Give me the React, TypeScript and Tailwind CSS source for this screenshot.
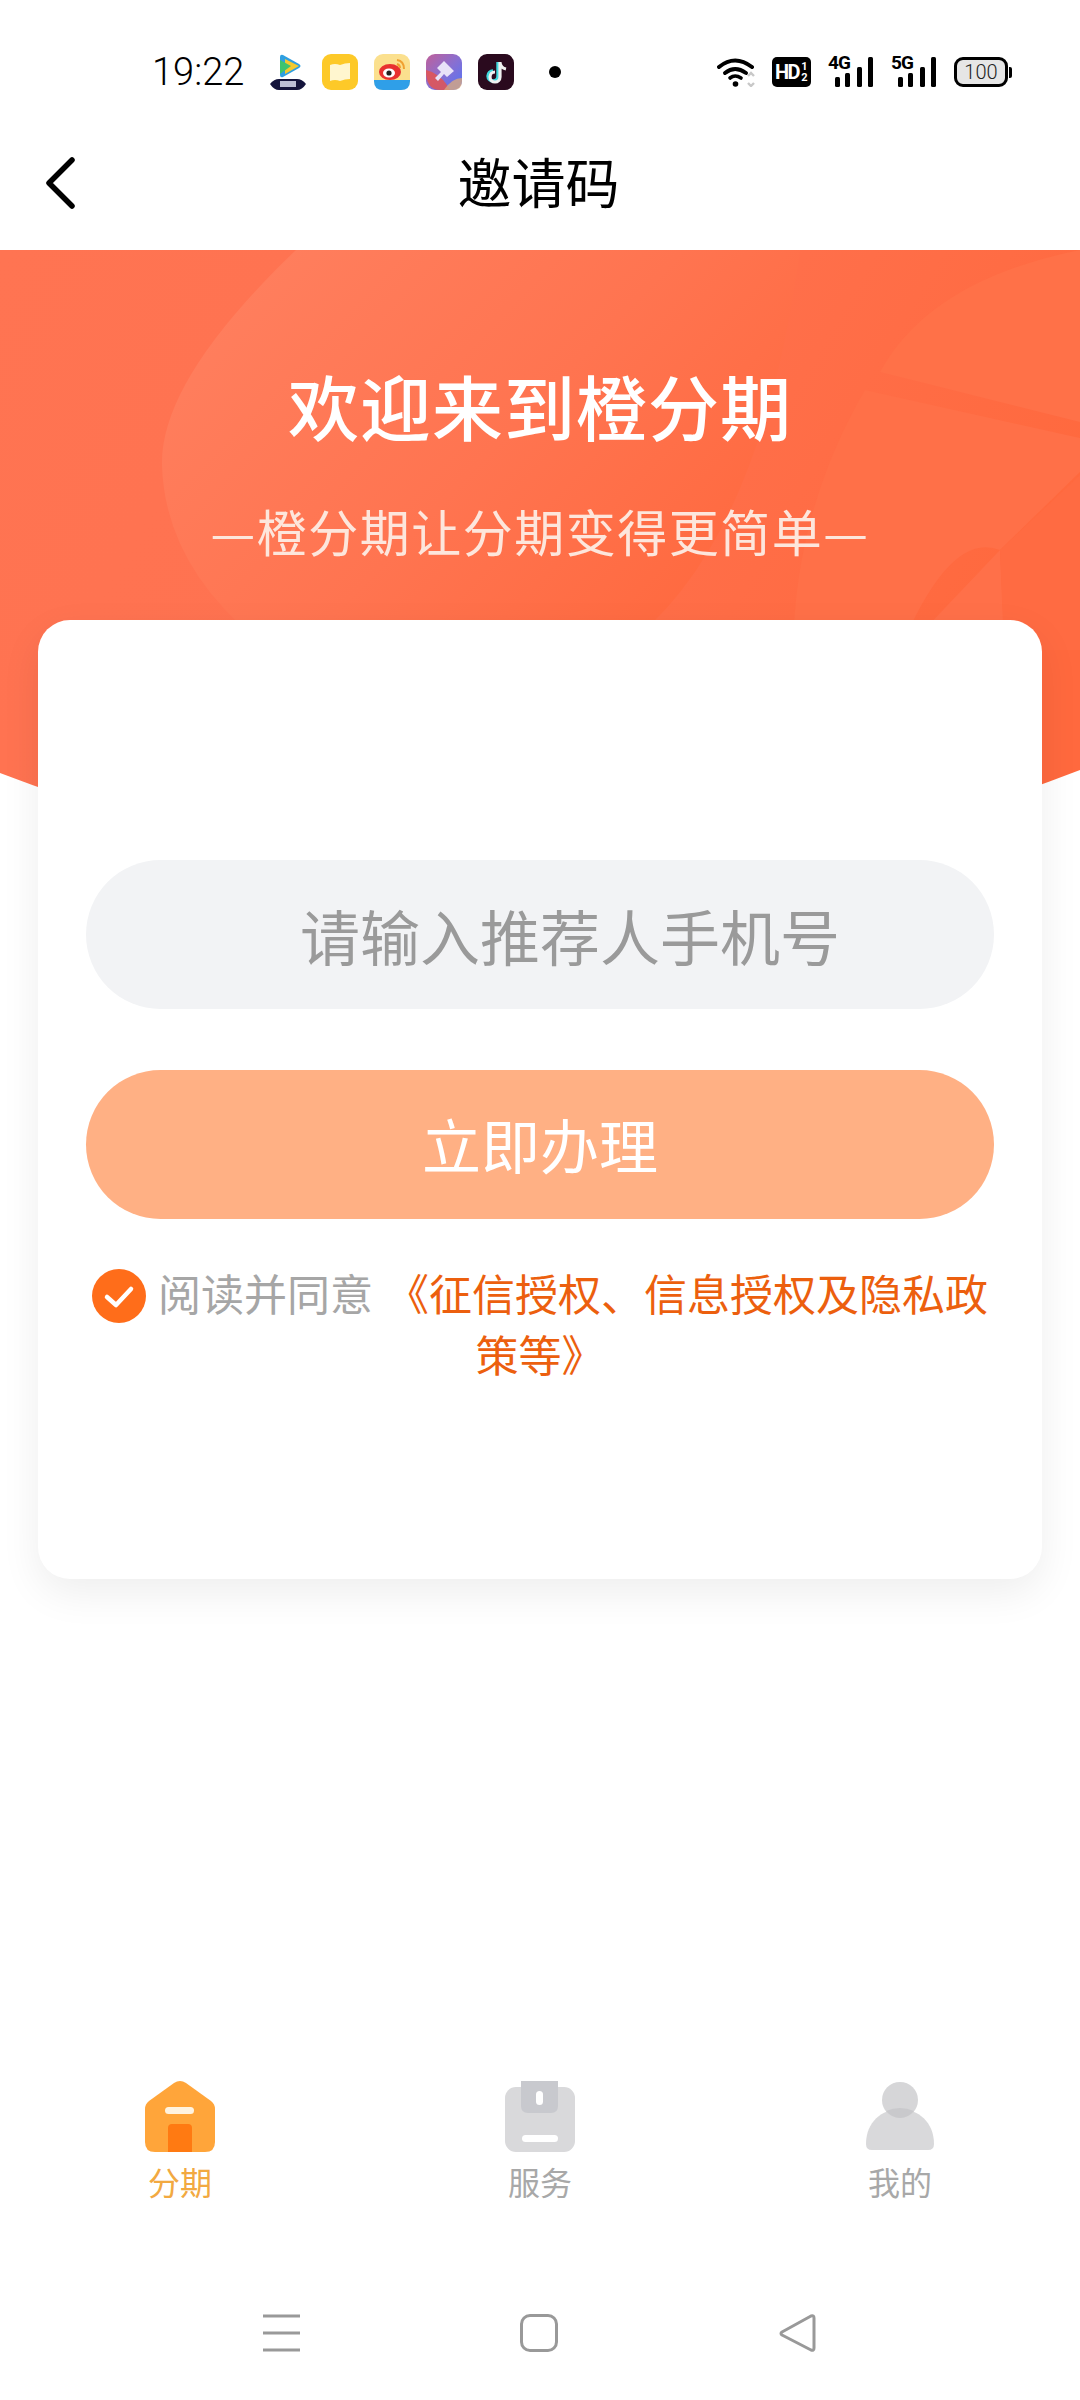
import React from 'react';

const FONT = 'font-["Noto_Sans_CJK_SC","Noto_Sans",sans-serif]';

// Iconos de apps en la barra de estado
const TencentIcon = () => (
  <svg width="36" height="36" viewBox="0 0 36 36">
    <path d="M10 3 Q10 0 13 1 L29 10 Q32 12 29 14 L13 23 Q10 24 10 21 Z" fill="#2f9fe0" />
    <path d="M15 5 L29 12 L15 20 Z" fill="#f4c92f" />
    <path d="M10 6 L21 12 L10 20 Z" fill="#3ec46e" />
    <path d="M0 30 Q4 25 9 25 H27 Q32 25 36 30 Q32 36 27 36 H9 Q4 36 0 30 Z" fill="#14143c" />
    <rect x="10" y="27" width="16" height="6" fill="#d9dcf0" opacity="0.85" />
  </svg>
);

const BookIcon = () => (
  <svg width="36" height="36" viewBox="0 0 36 36">
    <rect width="36" height="36" rx="9" fill="#fdc928" />
    <path d="M8 11 Q13 9 18 11 Q23 9 28 9 V25 Q23 25 18 27 Q13 25 8 27 Z" fill="#fff6cf" />
  </svg>
);

const WeiboIcon = () => (
  <svg width="36" height="36" viewBox="0 0 36 36">
    <rect width="36" height="36" rx="9" fill="#fbe08e" />
    <path d="M0 26 H36 V27 Q36 36 27 36 H9 Q0 36 0 27 Z" fill="#2f9fe8" />
    <ellipse cx="16" cy="18" rx="11" ry="8" fill="#e8312f" />
    <ellipse cx="15" cy="19" rx="6" ry="4.5" fill="#fff" />
    <circle cx="15" cy="19" r="2.6" fill="#222" />
    <path d="M23 6 Q30 7 30 15" stroke="#f0a030" strokeWidth="2" fill="none" />
    <path d="M23 10 Q26 11 26 14" stroke="#f0a030" strokeWidth="2" fill="none" />
  </svg>
);

const BrushIcon = () => (
  <svg width="36" height="36" viewBox="0 0 36 36">
    <defs>
      <linearGradient id="brushBg" x1="0" y1="0" x2="1" y2="1">
        <stop offset="0" stopColor="#c0609a" />
        <stop offset="0.5" stopColor="#8a6fd0" />
        <stop offset="1" stopColor="#5274f8" />
      </linearGradient>
    </defs>
    <rect width="36" height="36" rx="9" fill="url(#brushBg)" />
    <path d="M0 16 Q0 36 14 36 H24 Q18 24 6 18 Z" fill="#e8534a" opacity="0.8" />
    <path d="M18 36 H27 Q36 36 36 27 V24 Q26 24 18 36 Z" fill="#d8a880" opacity="0.8" />
    <path d="M18 7 L28 17 L21 23 L18 20 L12 27 L9 24 L15 18 L11 14 Z" fill="#e8e2f8" />
  </svg>
);

const TiktokIcon = () => (
  <svg width="36" height="36" viewBox="0 0 36 36">
    <rect width="36" height="36" rx="9" fill="#2a0a1e" />
    <path d="M20 8 V22 A5 5 0 1 1 15 17" stroke="#3fd8dc" strokeWidth="3.4" fill="none" />
    <path d="M22 8 V23 A5 5 0 1 1 17 18 M22 9 Q23 14 28 15" stroke="#f0f0f0" strokeWidth="3.2" fill="none" />
  </svg>
);

const SignalBars = () => (
  <svg width="38" height="30" viewBox="0 0 38 30">
    <rect x="0" y="20" width="5" height="10" rx="1.5" fill="#000" />
    <rect x="10" y="16" width="5" height="14" rx="1.5" fill="#000" />
    <rect x="22" y="10" width="5" height="20" rx="1.5" fill="#000" />
    <rect x="33" y="0" width="5" height="30" rx="1.5" fill="#000" />
  </svg>
);

const Signal = ({ label }: { label: string }) => (
  <div className="relative w-[45px] h-[30px] flex justify-end">
    <SignalBars />
    <span className='absolute left-0 top-[-3px] text-[19px] leading-[18px] font-bold text-black font-["Roboto",sans-serif] tracking-[-1px]'>
      {label}
    </span>
  </div>
);

const StatusBar = () => (
  <div className="h-[110px] pt-[57px] pl-[152px] flex items-start">
    <span className='w-[92px] text-[38px] leading-[30px] text-black font-["Roboto",sans-serif] font-light whitespace-nowrap'>19:22</span>
    <div className="ml-[26px] mt-[-3px] w-[447px] flex items-center gap-[16px]">
      <TencentIcon />
      <BookIcon />
      <WeiboIcon />
      <BrushIcon />
      <TiktokIcon />
      <div className="ml-[19px] w-[12px] h-[12px] rounded-full bg-black" />
    </div>
    <div className="flex items-center">
      <svg width="39" height="30" viewBox="0 0 39 30">
        <path d="M2 10 Q18 -3 35 10" stroke="#000" strokeWidth="4" fill="none" strokeLinecap="round" />
        <path d="M8 16 Q18 8 29 16" stroke="#000" strokeWidth="4" fill="none" strokeLinecap="round" />
        <path d="M13 21 Q18 17 24 21" stroke="#000" strokeWidth="3.6" fill="none" strokeLinecap="round" />
        <circle cx="18.5" cy="27" r="2.8" fill="#000" />
        <path d="M31 19 L34 16 L37 19 M31 26 L34 29 L37 26" stroke="#c8c8c8" strokeWidth="2.4" fill="none" />
      </svg>
      <div className='ml-[16px] w-[39px] h-[30px] rounded-[5px] bg-black text-white flex items-center pl-[3px] font-bold font-["Roboto",sans-serif]'>
        <span className="text-[20px] tracking-[-1.5px]">HD</span>
        <span className="ml-[2px] flex flex-col text-[11px] leading-[11px]">
          <span>1</span>
          <span>2</span>
        </span>
      </div>
      <div className="ml-[17px]"><Signal label="4G" /></div>
      <div className="ml-[18px]"><Signal label="5G" /></div>
      <div className="ml-[18px] flex items-center">
        <div className='w-[54px] h-[30px] rounded-[9px] border-[3px] border-black bg-[#e6e6e6] flex items-center justify-center text-[20px] text-[#222] font-["Roboto",sans-serif] font-light'>
          100
        </div>
        <div className="ml-[1px] w-[3px] h-[11px] bg-black rounded-r-[2px]" />
      </div>
    </div>
  </div>
);

const Header = () => (
  <div className="h-[140px] relative flex items-center justify-center pt-[2px]">
    <svg width="34" height="52" viewBox="0 0 34 52" className="absolute left-[43px] top-[47px]">
      <path d="M29 3 L6 26 L29 49" stroke="#000" strokeWidth="5.5" fill="none" strokeLinecap="round" strokeLinejoin="round" />
    </svg>
    <span className="text-[54px] leading-none text-black ml-[-3px]">邀请码</span>
  </div>
);

// Fondo naranja con las formas claras
const HeroBackground = () => (
  <svg width="1080" height="640" viewBox="0 0 1080 640" className="absolute inset-0">
    <defs>
      <linearGradient id="heroBg" x1="0" y1="0" x2="1" y2="0.35">
        <stop offset="0" stopColor="#ff7452" />
        <stop offset="0.5" stopColor="#ff7250" />
        <stop offset="1" stopColor="#ff693e" />
      </linearGradient>
      <linearGradient id="heroBlob" x1="0" y1="0" x2="1" y2="0.6">
        <stop offset="0" stopColor="#ff8161" />
        <stop offset="0.6" stopColor="#ff7450" />
        <stop offset="1" stopColor="#ff6a40" />
      </linearGradient>
      <clipPath id="heroClip">
        <path d="M0 523 V0 H1080 V520 Q540 730 0 523 Z" />
      </clipPath>
    </defs>
    <g clipPath="url(#heroClip)">
      <rect width="1080" height="640" fill="url(#heroBg)" />
      <path d="M296 0 Q160 130 162 215 Q165 320 270 400 H620 Q760 300 800 0 Z" fill="url(#heroBlob)" />
      <path d="M1080 0 Q930 30 880 122 L1080 172 Z" fill="#ff7148" />
      <path d="M865 140 Q795 260 793 400 L900 400 Q950 280 1000 300 L1080 222 V188 Z" fill="#ff7048" />
      <path d="M1000 300 L924 380 H1004 Z" fill="#ff7049" />
      <path d="M1004 400 L1000 300 L1080 225 V400 Z" fill="#ff6b42" />
    </g>
  </svg>
);

const Hero = () => (
  <div className="relative h-[640px] text-center">
    <HeroBackground />
    <div className="relative pt-[114px]">
      <h1 className="text-[71px] leading-[80px] font-medium text-white tracking-[1px]">欢迎来到橙分期</h1>
      <p className="mt-[56px] text-[50px] leading-[60px] text-[#fde6dc] tracking-[1.5px]">—橙分期让分期变得更简单—</p>
    </div>
  </div>
);

const FormCard = () => (
  <div className="relative mx-[38px] mt-[-270px] h-[959px] rounded-[32px] bg-white shadow-[0_14px_40px_rgba(0,0,0,0.07)] px-[48px] pt-[240px]">
    <div className="h-[149px] rounded-[75px] bg-[#f2f3f5] flex items-center justify-center pl-[60px] text-[60px] text-[#9a9a9a]">
      请输入推荐人手机号
    </div>
    <div className="mt-[61px] h-[149px] rounded-[75px] bg-[#ffb084] flex items-center justify-center text-[59px] text-white">
      立即办理
    </div>
    <div className="mt-[43px] mx-[-3px] text-center text-[43px] leading-[60px]">
      <svg width="54" height="54" viewBox="0 0 54 54" className="inline-block align-[-12px] mr-[12px]">
        <circle cx="27" cy="27" r="27" fill="#ff6d1a" />
        <path d="M15 28 L24 36 L39 20" stroke="#fff" strokeWidth="4.5" fill="none" strokeLinecap="round" strokeLinejoin="round" />
      </svg>
      <span className="text-[#a6a6a6]">阅读并同意</span>
      <span className="ml-[13px] text-[#ec5f0e]">《征信授权、信息授权及隐私政策等》</span>
    </div>
  </div>
);

const TabBar = () => (
  <div className="mt-auto grid grid-cols-3 text-center text-[32px] leading-[40px]">
    <div className="flex flex-col items-center text-[#f2a941]">
      <svg width="72" height="74" viewBox="0 0 72 74">
        <path d="M30 3 Q36 -1 42 3 L67 21 Q71 24 71 29 V62 Q71 72 61 72 H11 Q1 72 1 62 V29 Q1 24 5 21 Z" fill="#ffa53a" />
        <rect x="21" y="27" width="29" height="7" rx="3.5" fill="#fff3e0" />
        <path d="M24 48 Q24 44 28 44 H44 Q48 44 48 48 V72 H24 Z" fill="#ff7a12" />
      </svg>
      <span className="mt-[7px]">分期</span>
    </div>
    <div className="flex flex-col items-center text-[#a8a8a8]">
      <svg width="72" height="74" viewBox="0 0 72 74">
        <rect x="1" y="7" width="70" height="65" rx="11" fill="#d9d9db" />
        <path d="M17 1 H54 V26 Q54 33 47 33 H24 Q17 33 17 26 Z" fill="#c8c9ce" />
        <rect x="32" y="11" width="7" height="14" rx="3.5" fill="#fff" />
        <rect x="18" y="55" width="36" height="7" rx="3.5" fill="#fff" />
      </svg>
      <span className="mt-[7px]">服务</span>
    </div>
    <div className="flex flex-col items-center text-[#a8a8a8]">
      <svg width="72" height="74" viewBox="0 0 72 74">
        <path d="M2 64 C2 42 18 29 36 29 C54 29 70 42 70 64 Q70 70 64 70 H8 Q2 70 2 64 Z" fill="#d9d9db" />
        <circle cx="36" cy="20" r="18" fill="#d6d6d8" />
        <path d="M22 31 Q36 25 50 31 Q44 38 36 38 Q28 38 22 31 Z" fill="#c9c9cc" />
      </svg>
      <span className="mt-[7px]">我的</span>
    </div>
  </div>
);

const NavBar = () => (
  <div className="mt-[113px] mb-[48px] h-[38px] pl-[263px] flex items-center">
    <svg width="38" height="38" viewBox="0 0 38 38">
      <path d="M0 2 H37 M0 19 H37 M0 36 H37" stroke="#999" strokeWidth="3" />
    </svg>
    <div className="ml-[219px] w-[38px] h-[38px] rounded-[10px] border-[3px] border-[#999]" />
    <svg width="38" height="38" viewBox="0 0 38 38" className="ml-[221px]">
      <path d="M3 18 L32 2 Q35 1 35 4 V34 Q35 37 32 36 L3 21 Q1 19.500 3 18 Z" stroke="#999" strokeWidth="3" fill="none" strokeLinejoin="round" />
    </svg>
  </div>
);

export default function App() {
  return (
    <div className={`w-[1080px] h-[2400px] bg-white flex flex-col overflow-hidden ${FONT}`}>
      <StatusBar />
      <Header />
      <Hero />
      <FormCard />
      <TabBar />
      <NavBar />
    </div>
  );
}
